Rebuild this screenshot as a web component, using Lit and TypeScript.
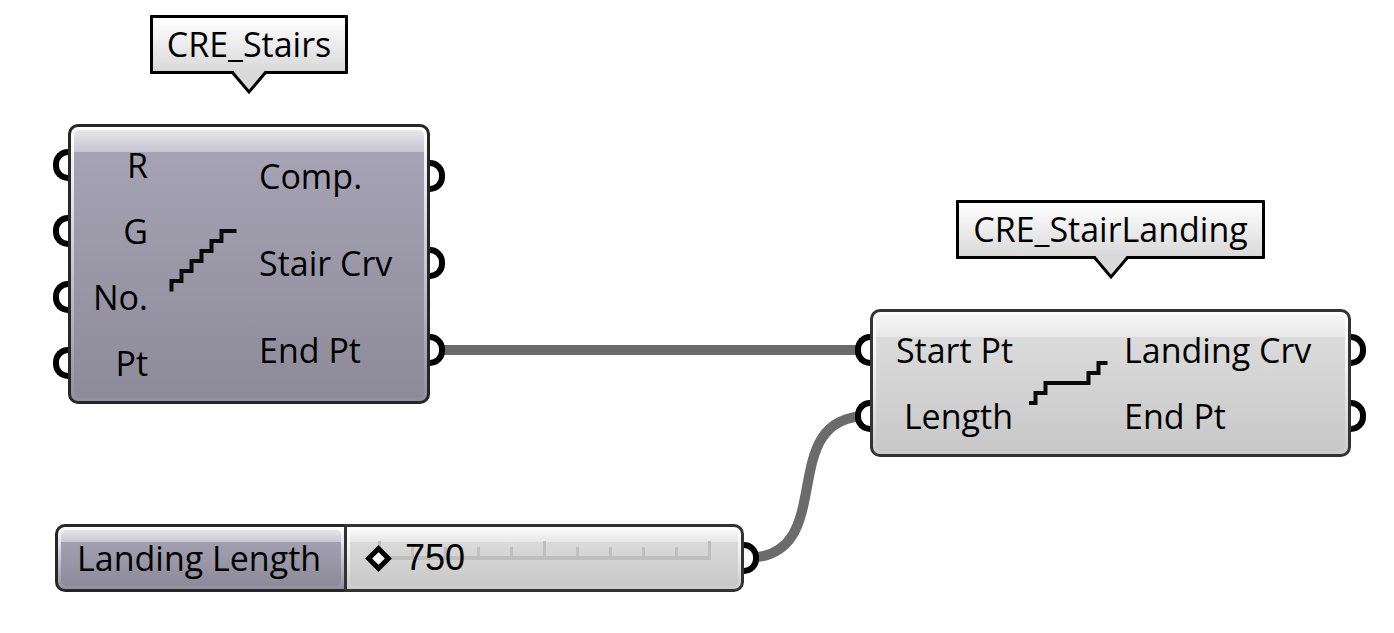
import { LitElement, html, css, svg } from "lit";
import { customElement, property, state } from "lit/decorators.js";
import { styleMap } from "lit/directives/style-map.js";

interface NodeSpec {
  title: string;
  tone: "violet" | "silver";
  x: number;
  y: number;
  width: number;
  inputWidth: number;
  inputs: string[];
  outputs: string[];
  outputRow: number;
  icon: string;
}

const NODES: NodeSpec[] = [
  {
    title: "CRE_Stairs",
    tone: "violet",
    x: 68,
    y: 15,
    width: 362,
    inputWidth: 77,
    inputs: ["R", "G", "No.", "Pt"],
    outputs: ["Comp.", "Stair Crv", "End Pt"],
    outputRow: 87,
    icon: "M7.5 67.5V57h10V47h10V37h10V27h10V17h10V7h15",
  },
  {
    title: "CRE_StairLanding",
    tone: "silver",
    x: 870,
    y: 200,
    width: 481,
    inputWidth: 140,
    inputs: ["Start Pt", "Length"],
    outputs: ["Landing Crv", "End Pt"],
    outputRow: 66,
    icon: "M0 60h6.500V50h10V40h43V30h10V20h9",
  },
];

/* Glossy capsule surface and the half-round grips, shared by nodes and the slider. */
const surface = css`
  * {
    box-sizing: border-box;
  }
  .surface {
    position: relative;
    isolation: isolate;
    border: 3px solid #2c2c2c;
  }
  .surface::before {
    content: "";
    position: absolute;
    inset: 3px;
    z-index: -1;
    border-radius: 5px;
    background:
      linear-gradient(var(--gloss-top), var(--gloss-bottom)) top / 100% var(--gloss) no-repeat,
      linear-gradient(var(--body-top), var(--body-bottom));
  }
  .violet {
    --gloss-top: #e7e6eb;
    --gloss-bottom: #c7c5d1;
    --body-top: #a8a6b6;
    --body-bottom: #8d8b99;
    background: linear-gradient(#ffffff, #e0dfe6 30%, #92909e);
    border-color: #262626;
  }
  .silver {
    --gloss-top: #f8f8f8;
    --gloss-bottom: #e7e7e7;
    --body-top: #dfdfdf;
    --body-bottom: #c8c8c8;
    background: linear-gradient(#ffffff, #f0f0f0 40%, #cccccc);
    border-color: #333333;
  }
  .grip {
    position: absolute;
    top: 50%;
    width: 15px;
    height: 32px;
    margin-top: -16px;
    border: 6px solid #000;
    background: #fff;
  }
  .grip.in {
    left: -18px;
    border-right: 0;
    border-radius: 15px 0 0 15px;
  }
  .grip.out {
    right: -18px;
    border-left: 0;
    border-radius: 0 15px 15px 0;
  }
`;

@customElement("graph-node")
export class GraphNode extends LitElement {
  @property({ attribute: false }) spec!: NodeSpec;

  static styles = [
    surface,
    css`
      :host {
        display: block;
      }
      .unit {
        display: flex;
        flex-direction: column;
        align-items: center;
      }
      .tag {
        margin: 0;
        padding: 0 14px;
        border: 3px solid #000;
        border-radius: 1px;
        background: linear-gradient(#ffffff, #d9d9d9);
        font-size: 34px;
        font-weight: 400;
        line-height: 53px;
        white-space: nowrap;
      }
      .tip {
        display: block;
        width: 36px;
        height: 24px;
        margin: -3px 0 29px;
        z-index: 1;
      }
      .body {
        --gloss: 22px;
        display: grid;
        align-items: start;
        width: 100%;
        padding: 5px 0;
        border-radius: 10px;
      }
      .ports {
        margin: 0;
        padding: 0;
        list-style: none;
      }
      .port {
        position: relative;
        display: flex;
        align-items: center;
        height: 66px;
        font-size: 34px;
        line-height: 48px;
        white-space: nowrap;
      }
      .inputs .port {
        justify-content: flex-end;
      }
      .icon {
        align-self: center;
        justify-self: center;
        width: 80px;
        height: 80px;
        filter: blur(0.6px);
      }
    `,
  ];

  render() {
    const s = this.spec;
    const columns = { gridTemplateColumns: `${s.inputWidth}px 111px 1fr` };
    return html`
      <section class="unit">
        <h2 class="tag">${s.title}</h2>
        <svg class="tip" viewBox="0 0 36 24" aria-hidden="true">
          <path d="M2 0L18 21L34 0Z" fill="#d9d9d9" />
          <path d="M0 1.5H1.5L18 21L34.5 1.5H36" fill="none" stroke="#000" stroke-width="3" />
        </svg>
        <div class="body surface ${s.tone}" style=${styleMap(columns)}>
          <ul class="ports inputs">
            ${s.inputs.map((p) => html`<li class="port"><span class="grip in"></span>${p}</li>`)}
          </ul>
          <svg class="icon" viewBox="0 0 80 80" aria-hidden="true">
            <path d=${s.icon} fill="none" stroke="#080808" stroke-width="4" />
          </svg>
          <ul class="ports">
            ${s.outputs.map(
              (p) => html`<li class="port" style=${styleMap({ height: `${s.outputRow}px` })}>
                ${p}<span class="grip out"></span>
              </li>`
            )}
          </ul>
        </div>
      </section>
    `;
  }
}

@customElement("number-slider")
export class NumberSlider extends LitElement {
  @state() private value = 750;

  static styles = [
    surface,
    css`
      :host {
        display: block;
      }
      .bar {
        position: relative;
        display: flex;
        height: 68px;
      }
      .name,
      .track {
        --gloss: 12px;
        display: grid;
        align-items: center;
      }
      .name {
        width: 293px;
        padding-left: 19px;
        border-radius: 10px 0 0 10px;
        font-size: 34px;
        line-height: 48px;
        white-space: nowrap;
      }
      .track {
        flex: 1;
        margin-left: -3px;
        padding-left: 18px;
        padding-right: 18px;
        border-radius: 0 10px 10px 0;
      }
      .scale,
      .range,
      .value {
        grid-area: 1 / 1;
      }
      .scale {
        width: 358px;
        height: 36px;
      }
      .range {
        appearance: none;
        width: 358px;
        height: 36px;
        margin: 0;
        padding: 0 4px;
        background: none;
      }
      .range::-webkit-slider-thumb {
        appearance: none;
        width: 19px;
        height: 19px;
        border: 5px solid #000;
        background: #fff;
        transform: rotate(45deg);
      }
      .value {
        padding-left: 40px;
        font: 36px/48px "Liberation Sans", Arial, sans-serif;
        pointer-events: none;
      }
    `,
  ];

  private onInput(e: Event) {
    this.value = (e.target as HTMLInputElement).valueAsNumber;
  }

  render() {
    const ticks = Array.from({ length: 11 }, (_, i) => i);
    return html`
      <div class="bar">
        <label class="name surface violet" for="length">Landing Length</label>
        <div class="track surface silver">
          <svg class="scale" viewBox="0 0 358 36" aria-hidden="true">
            <path d="M14 18H346" stroke="#bebebe" stroke-width="4" />
            ${ticks.map(
              (i) => svg`<path d="M${14.5 + i * 33} ${i % 5 ? 7 : 1}V19" stroke="#bebebe" stroke-width="3" />`
            )}
          </svg>
          <input
            class="range"
            id="length"
            type="range"
            min="750"
            max="1750"
            .value=${String(this.value)}
            @input=${this.onInput}
          />
          <output class="value" for="length">${this.value}</output>
          <span class="grip out"></span>
        </div>
      </div>
    `;
  }
}

@customElement("app-root")
export class AppRoot extends LitElement {
  static styles = css`
    :host {
      display: block;
      color: #000;
      font-family: "Open Sans", "Noto Sans", sans-serif;
    }
    .canvas {
      position: relative;
      min-height: 100vh;
      overflow: hidden;
      background: #fff;
    }
    .wires {
      position: absolute;
      inset: 0;
      width: 100%;
      height: 100%;
      fill: none;
      stroke: #6b6b6b;
      stroke-width: 10px;
    }
    .item {
      position: absolute;
    }
    .slider {
      left: 55px;
      top: 524px;
      width: 689px;
    }
  `;

  render() {
    return html`
      <main class="canvas">
        <svg class="wires" aria-hidden="true">
          <path d="M436 350H864" />
          <path d="M746 558C842 558 772 416 868 416" />
        </svg>
        ${NODES.map(
          (n) => html`<graph-node
            class="item"
            style=${styleMap({ left: `${n.x}px`, top: `${n.y}px`, width: `${n.width}px` })}
            .spec=${n}
          ></graph-node>`
        )}
        <number-slider class="item slider"></number-slider>
      </main>
    `;
  }
}
